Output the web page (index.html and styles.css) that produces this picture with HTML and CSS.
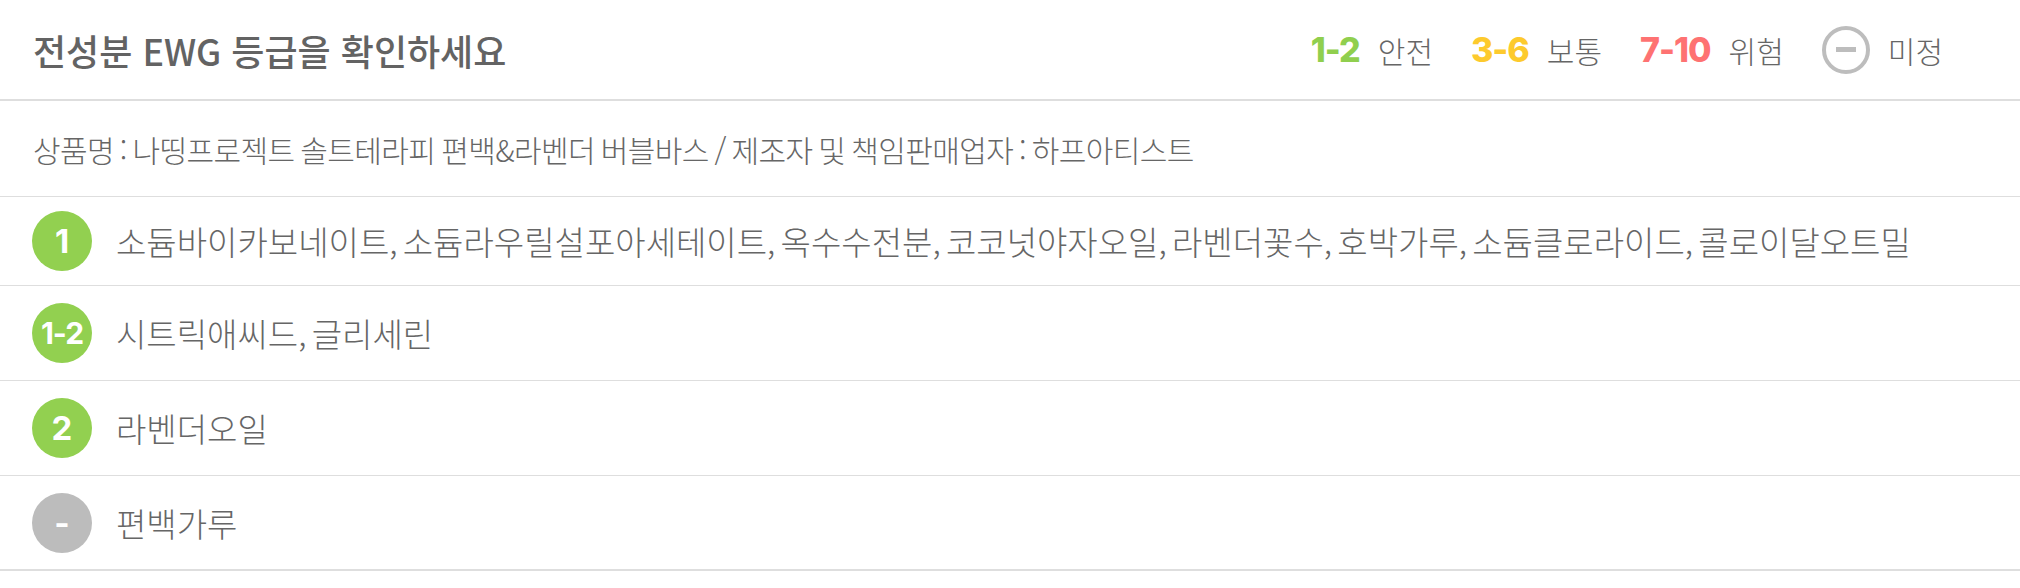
FILE: index.html
```html
<!DOCTYPE html>
<html lang="ko">
<head>
<meta charset="utf-8">
<title>전성분 EWG 등급</title>
<link rel="stylesheet" href="styles.css">
</head>
<body>
<section class="ewg">
  <header class="ewg-head">
    <h2 class="ewg-title">전성분 EWG 등급을 확인하세요</h2>
    <ul class="legend">
      <li class="legend-item"><span class="grade green">1-2</span><span class="legend-label">안전</span></li>
      <li class="legend-item"><span class="grade yellow">3-6</span><span class="legend-label">보통</span></li>
      <li class="legend-item"><span class="grade red">7-10</span><span class="legend-label">위험</span></li>
      <li class="legend-item"><span class="undef-icon"></span><span class="legend-label">미정</span></li>
    </ul>
  </header>
  <p class="product">상품명 : 나띵프로젝트 솔트테라피 편백&amp;라벤더 버블바스 / 제조자 및 책임판매업자 : 하프아티스트</p>
  <ul class="ingredients">
    <li class="row row-first"><span class="badge badge-green">1</span><span class="names">소듐바이카보네이트, 소듐라우릴설포아세테이트, 옥수수전분, 코코넛야자오일, 라벤더꽃수, 호박가루, 소듐클로라이드, 콜로이달오트밀</span></li>
    <li class="row"><span class="badge badge-green badge-small">1-2</span><span class="names">시트릭애씨드, 글리세린</span></li>
    <li class="row"><span class="badge badge-green">2</span><span class="names">라벤더오일</span></li>
    <li class="row row-last"><span class="badge badge-gray">-</span><span class="names">편백가루</span></li>
  </ul>
</section>
</body>
</html>
```

FILE: styles.css
```css
* { box-sizing: border-box; }
html, body { margin: 0; padding: 0; background: #fff; }
body { font-family: "Noto Sans CJK KR", "Noto Sans", sans-serif; color: #666; }

.ewg { width: 2020px; }

.ewg-head {
  height: 101px;
  display: flex;
  align-items: center;
  justify-content: space-between;
  padding: 0 77px 0 33px;
  border-bottom: 2px solid #dedede;
}
.ewg-title {
  margin: 0;
  font-size: 36px;
  font-weight: 500;
  color: #636363;
}

.legend {
  list-style: none;
  margin: 0;
  padding: 0;
  display: flex;
  align-items: center;
  gap: 38px;
}
.legend-item {
  display: flex;
  align-items: center;
  gap: 18px;
}
.grade {
  font-family: "Inter", "Liberation Sans", sans-serif;
  font-weight: 800;
  font-size: 34px;
  letter-spacing: -1px;
}
.green { color: #90cf4e; }
.yellow { color: #fdca2d; }
.red { color: #fe7272; }
.legend-label {
  font-size: 30px;
  font-weight: 300;
  color: #666;
}
.undef-icon {
  width: 48px;
  height: 48px;
  border: 4px solid #bdbdbd;
  border-radius: 50%;
  display: flex;
  align-items: center;
  justify-content: center;
}
.undef-icon::before {
  content: "";
  width: 20px;
  height: 5px;
  background: #bdbdbd;
}

.product {
  margin: 0;
  height: 96px;
  display: flex;
  align-items: center;
  padding-left: 33px;
  font-size: 30px;
  font-weight: 300;
  letter-spacing: -0.6px;
  word-spacing: -2px;
  color: #666;
  border-bottom: 1px solid #dedede;
}

.ingredients {
  list-style: none;
  margin: 0;
  padding: 0;
}
.row {
  height: 95px;
  display: flex;
  align-items: center;
  gap: 24px;
  padding-left: 32px;
  border-bottom: 1px solid #dedede;
}
.row-first { height: 89px; }
.row-last { border-bottom: 2px solid #dedede; }

.badge {
  flex: none;
  width: 60px;
  height: 60px;
  border-radius: 50%;
  display: flex;
  align-items: center;
  justify-content: center;
  color: #fff;
  font-family: "Inter", "Liberation Sans", sans-serif;
  font-weight: 700;
  font-size: 33px;
}
.badge-small { font-size: 30px; letter-spacing: -1px; }
.badge-green { background: #92d050; }
.badge-gray { background: #bcbcbc; }

.names {
  font-size: 33px;
  font-weight: 300;
  word-spacing: -4px;
  color: #666;
}
```
